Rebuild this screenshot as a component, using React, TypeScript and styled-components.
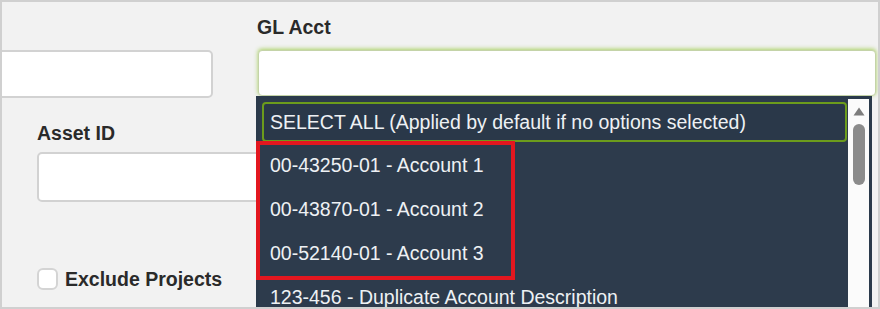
import React from "react";
import styled, { createGlobalStyle } from "styled-components";

const GlobalStyle = createGlobalStyle`
  html, body {
    margin: 0;
    padding: 0;
    background: #ffffff;
  }
  body {
    font-family: "Liberation Sans", Arial, sans-serif;
  }
`;

const Frame = styled.div`
  position: relative;
  box-sizing: border-box;
  width: 880px;
  height: 309px;
  border: 2px solid #d0d0d0;
  background: #f2f2f2;
  overflow: hidden;
  display: grid;
  grid-template-columns: 255px 1fr;
`;

const LeftColumn = styled.div`
  display: flex;
  flex-direction: column;
  padding-top: 48px;
`;

const RightColumn = styled.div`
  display: flex;
  flex-direction: column;
  padding-top: 14px;
  padding-right: 2px;
  position: relative;
  z-index: 2;
`;

const Label = styled.div<{ $indent?: number }>`
  margin-left: ${(p) => p.$indent ?? 0}px;
  font-size: 19.5px;
  line-height: 22px;
  font-weight: 700;
  color: #2a2a2a;
  white-space: nowrap;
`;

const TextInput = styled.div<{ $left: number; $width: number; $height: number }>`
  box-sizing: border-box;
  margin-left: ${(p) => p.$left}px;
  width: ${(p) => p.$width}px;
  height: ${(p) => p.$height}px;
  flex-shrink: 0;
  background: #ffffff;
  border: 2px solid #d2d2d2;
  border-radius: 5px;
`;

const FocusedInput = styled.div`
  box-sizing: border-box;
  height: 46px;
  margin-top: 12px;
  margin-left: 1px;
  background: #ffffff;
  border: 1px solid #c4d3a8;
  border-radius: 4px;
  box-shadow: 0 -1px 4px rgba(150, 200, 60, 0.8);
`;

const Field = styled.div`
  position: relative;
`;

const Dropdown = styled.div`
  position: absolute;
  top: 100%;
  left: -1px;
  width: 616px;
  height: 240px;
  box-sizing: border-box;
  border: 3px solid #2b3a4b;
  background: #2d3b4c;
  display: flex;
`;

const OptionList = styled.div`
  flex: 1;
  display: flex;
  flex-direction: column;
  padding: 3px 1px 0 3px;
`;

const SelectAll = styled.div`
  box-sizing: border-box;
  height: 40px;
  border: 2px solid #6c9c1c;
  border-radius: 4px;
  padding-left: 6px;
  padding-top: 1px;
  display: flex;
  align-items: center;
  color: #eef1f4;
  font-size: 19.5px;
  white-space: nowrap;
  background: #2a3849;
`;

const Option = styled.div`
  height: 44px;
  padding-left: 8px;
  padding-top: 3px;
  box-sizing: border-box;
  display: flex;
  align-items: center;
  color: #eef1f4;
  font-size: 19.5px;
  white-space: nowrap;
  flex-shrink: 0;
`;

const Scrollbar = styled.div`
  width: 21px;
  background: #fbfbfb;
  display: flex;
  flex-direction: column;
  align-items: center;
  padding-top: 8px;
`;

const Thumb = styled.div`
  margin-top: 8px;
  width: 12px;
  height: 61px;
  border-radius: 6px;
  background: #8b8b8b;
`;

const CheckRow = styled.div`
  margin-top: 66px;
  margin-left: 35px;
  display: flex;
  align-items: center;
  gap: 7px;
`;

const Checkbox = styled.div`
  box-sizing: border-box;
  width: 21px;
  height: 22px;
  background: #ffffff;
  border: 2px solid #d4d4d4;
  border-radius: 6px;
`;

const Highlight = styled.div`
  position: absolute;
  left: 254px;
  top: 139px;
  width: 259px;
  height: 139px;
  box-sizing: border-box;
  border: 4px solid #e3171f;
  z-index: 3;
  pointer-events: none;
`;

const accounts = [
  "00-43250-01 - Account 1",
  "00-43870-01 - Account 2",
  "00-52140-01 - Account 3",
  "123-456 - Duplicate Account Description",
];

export default function App() {
  return (
    <>
      <GlobalStyle />
      <Frame>
        <LeftColumn>
          <TextInput $left={-20} $width={231} $height={48} />
          <Label $indent={35} style={{ marginTop: 24 }}>
            Asset ID
          </Label>
          <TextInput $left={35} $width={260} $height={50} style={{ marginTop: 8 }} />
          <CheckRow>
            <Checkbox />
            <Label>Exclude Projects</Label>
          </CheckRow>
        </LeftColumn>
        <RightColumn>
          <Label>GL Acct</Label>
          <Field>
            <FocusedInput />
            <Dropdown>
              <OptionList>
                <SelectAll>SELECT ALL (Applied by default if no options selected)</SelectAll>
                {accounts.map((a) => (
                  <Option key={a}>{a}</Option>
                ))}
              </OptionList>
              <Scrollbar>
                <svg width="12" height="9" viewBox="0 0 12 9">
                  <path d="M6 0.5 L11.5 8.5 L0.5 8.5 Z" fill="#7d7d7d" />
                </svg>
                <Thumb />
              </Scrollbar>
            </Dropdown>
          </Field>
        </RightColumn>
        <Highlight />
      </Frame>
    </>
  );
}
